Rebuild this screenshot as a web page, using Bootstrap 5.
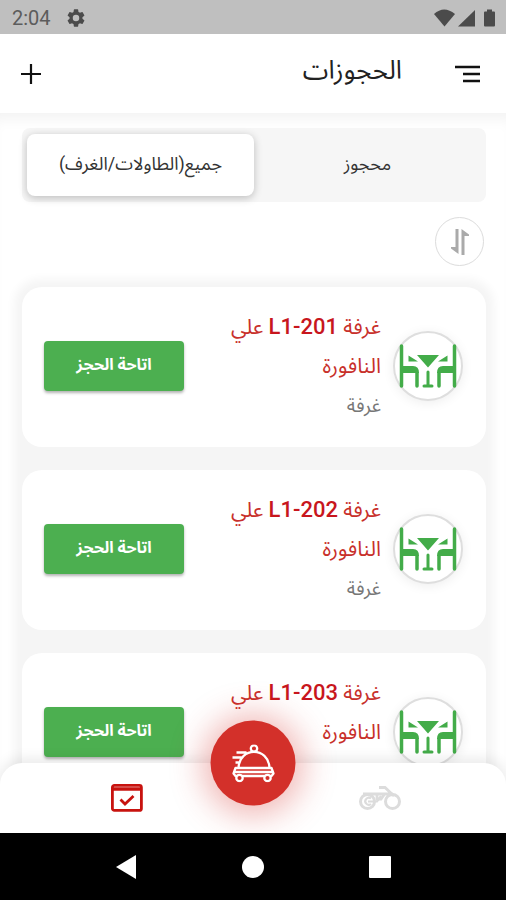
<!DOCTYPE html>
<html lang="ar" dir="rtl">
<head>
<meta charset="utf-8">
<meta name="viewport" content="width=device-width, initial-scale=1">
<title>الحجوزات</title>
<link href="https://cdn.jsdelivr.net/npm/bootstrap@5.3.0/dist/css/bootstrap.min.css" rel="stylesheet">
<style>
  body { font-family: Roboto, "Noto Sans Arabic", "Noto Naskh Arabic", "DejaVu Sans", sans-serif; color: #222; background: #fff; }
  svg { display: block; flex: none; }
  .status-bar { background: #bfbfbf; color: #5c5c5c; height: 34px; padding: 2px 10px 0 12px; font-size: 20px; }
  .app-bar { height: 79px; padding: 0 20px; z-index: 2; }
  .app-title { font-size: 26px; line-height: 32px; font-weight: 400; color: #222; padding-bottom: 8px; }
  .icon-btn { color: #111; }
  .screen { padding: 15px 20px 0 22px; min-height: 0; box-shadow: inset 0 14px 14px -8px #f3f3f3; }
  .tab-set { background: #f6f6f6; border-radius: 8px; padding: 6px 5px; height: 74px; }
  .tab-btn { font-size: 18px; border: 0; border-radius: 8px; background: transparent; color: #333; padding: 0 0 4px; }
  .tab-btn.active { background: #fff; box-shadow: 0 2px 8px rgba(0,0,0,.24); }
  .sort-btn { width: 49px; height: 49px; border: 1px solid #dcdcdc; background: #fff; margin: 15px 2px 21px; }
  .bookings { gap: 23px; background: #f5f5f5; border-radius: 18px; box-shadow: 0 0 10px 8px #f5f5f5; }
  .booking { min-height: 160px; border-radius: 20px; background: #fff; padding: 19px 23px 22px 22px; gap: 12px; }
  .seat-icon { width: 70px; height: 70px; border: 2px solid #dedede; background: #fff; box-shadow: 0 2px 12px rgba(0,0,0,.07); }
  .booking-name { width: 158px; font-size: 21px; line-height: 39px; font-weight: 400; color: #c8302b; }
  .booking-name bdi { font-size: 22px; font-weight: 500; color: #c8161d; }
  .booking-kind { font-size: 19px; line-height: 39px; min-height: 39px; color: #777; }
  .btn-open { width: 140px; height: 50px; border: 0; border-radius: 4px; background: #4caf50; color: #fff; font-size: 16px; font-weight: 700; padding: 0 0 2px; box-shadow: 0 2px 3px rgba(0,0,0,.3); }
  .bottom-nav { height: 70px; border-radius: 22px 22px 0 0; box-shadow: 0 -4px 14px rgba(0,0,0,.09); }
  .main-action { width: 85px; height: 85px; background: #d3302a; box-shadow: 0 2px 32px 8px rgba(211,48,42,.35); }
  .main-action:hover { background: #d3302a; }
  .system-nav { height: 67px; background: #000; }
</style>
</head>
<body>
<div class="d-flex flex-column vh-100 overflow-hidden">
  <div class="status-bar d-flex align-items-center justify-content-between flex-shrink-0" dir="ltr">
    <div class="d-flex align-items-center gap-3">
      <span>2:04</span>
      <svg width="18" height="18" viewBox="2 2 20 20" fill="#4b4b4b"><path d="M19.14 12.94c.04-.3.06-.61.06-.94s-.02-.64-.07-.94l2.03-1.58a.5.5 0 0 0 .12-.61l-1.92-3.32a.49.49 0 0 0-.59-.22l-2.39.96a7 7 0 0 0-1.62-.94l-.36-2.54a.48.48 0 0 0-.48-.41h-3.84a.47.47 0 0 0-.47.41l-.36 2.54c-.59.24-1.13.57-1.62.94l-2.39-.96a.48.48 0 0 0-.59.22L2.74 8.87a.47.47 0 0 0 .12.61l2.03 1.58c-.05.3-.09.63-.09.94s.02.64.07.94l-2.03 1.58a.5.5 0 0 0-.12.61l1.92 3.32c.12.22.37.29.59.22l2.39-.96c.5.38 1.03.7 1.62.94l.36 2.54c.05.24.24.41.48.41h3.84c.24 0 .44-.17.47-.41l.36-2.54a7 7 0 0 0 1.62-.94l2.39.96c.22.08.47 0 .59-.22l1.92-3.32a.47.47 0 0 0-.12-.61zM12 15.6a3.6 3.6 0 1 1 0-7.2 3.6 3.6 0 0 1 0 7.2z"/></svg>
    </div>
    <svg width="62" height="20" viewBox="0 0 62 20" fill="#4b4b4b"><path d="M0 6Q10-3 21 6L10.500 18.500Z"/><path d="M24 18.500L41 2V18.500Z"/><path d="M50 4.500Q50 3.500 51 3.500H53V1.500H58V3.500H60Q61 3.500 61 4.500V17.500Q61 18.500 60 18.500H51Q50 18.500 50 17.500Z"/></svg>
  </div>

  <header class="app-bar bg-white d-flex align-items-center justify-content-between flex-shrink-0 position-relative">
    <div class="d-flex align-items-center">
      <button type="button" class="btn icon-btn border-0 p-0" aria-label="القائمة"><svg width="36" height="24" viewBox="0 0 36 24" stroke="#111" stroke-width="2.300"><path d="M5 5H30M13 12H30M13 19H30"/></svg></button>
      <h1 class="app-title mb-0 mx-5">الحجوزات</h1>
    </div>
    <button type="button" class="btn icon-btn border-0 p-0" aria-label="إضافة"><svg width="22" height="22" viewBox="0 0 22 22" stroke="#111" stroke-width="2.200"><path d="M1 11H21M11 1V21"/></svg></button>
  </header>

  <main class="screen flex-grow-1 position-relative overflow-hidden">
    <div class="tab-set d-flex" role="tablist">
      <button type="button" class="tab-btn w-50" role="tab" aria-selected="false">محجوز</button>
      <button type="button" class="tab-btn active w-50" role="tab" aria-selected="true">جميع(الطاولات/الغرف)</button>
    </div>
    <button type="button" class="sort-btn btn rounded-circle p-0 d-flex align-items-center justify-content-center" aria-label="ترتيب"><svg width="20" height="28" viewBox="0 0 20 28" fill="#aaa"><path d="M5.500 1H8.500V26L1 20.500V19H5.500ZM11.500 27H14.500V8H19V6.500L11.500 1Z"/></svg></button>

    <div class="bookings d-flex flex-column">
      <article class="booking d-flex align-items-center">
        <div class="seat-icon rounded-circle flex-shrink-0 d-flex align-items-center justify-content-center"><svg width="58" height="44" viewBox="0 0 58 44"><use href="#seats"/></svg></div>
        <div>
          <h2 class="booking-name mb-0"><span>غرفة</span> <bdi>L1-201</bdi> <span>علي</span> <span>النافورة</span></h2>
          <div class="booking-kind">غرفة</div>
        </div>
        <button type="button" class="btn btn-open me-auto flex-shrink-0">اتاحة الحجز</button>
      </article>
      <article class="booking d-flex align-items-center">
        <div class="seat-icon rounded-circle flex-shrink-0 d-flex align-items-center justify-content-center"><svg width="58" height="44" viewBox="0 0 58 44"><use href="#seats"/></svg></div>
        <div>
          <h2 class="booking-name mb-0"><span>غرفة</span> <bdi>L1-202</bdi> <span>علي</span> <span>النافورة</span></h2>
          <div class="booking-kind">غرفة</div>
        </div>
        <button type="button" class="btn btn-open me-auto flex-shrink-0">اتاحة الحجز</button>
      </article>
      <article class="booking d-flex align-items-center">
        <div class="seat-icon rounded-circle flex-shrink-0 d-flex align-items-center justify-content-center"><svg width="58" height="44" viewBox="0 0 58 44"><use href="#seats"/></svg></div>
        <div>
          <h2 class="booking-name mb-0"><span>غرفة</span> <bdi>L1-203</bdi> <span>علي</span> <span>النافورة</span></h2>
          <div class="booking-kind"></div>
        </div>
        <button type="button" class="btn btn-open me-auto flex-shrink-0">اتاحة الحجز</button>
      </article>
    </div>

    <nav class="bottom-nav bg-white position-absolute bottom-0 start-0 w-100 d-flex align-items-center">
      <a href="#delivery" class="w-50 d-flex justify-content-center" aria-label="توصيل"><svg width="44" height="28" viewBox="0 0 44 28" fill="none" stroke="#dcdcdc" stroke-width="3"><circle cx="9.500" cy="17.500" r="7"/><circle cx="34.500" cy="17.500" r="7"/><path d="M21 3.500H27L36 12M5 10H35M19 11V15H23L26 11" stroke-width="2.800"/><path d="M13 14.500A3.500 3.500 0 1 0 13 20M10 17.500H19L23 12" stroke-width="2.200"/></svg></a>
      <a href="#bookings" class="w-50 d-flex justify-content-center" aria-label="الحجوزات"><svg width="32" height="28" viewBox="0 0 32 28" fill="none" stroke="#c8130f" stroke-width="2.800"><rect x="1.400" y="1.400" width="29" height="25" rx="2"/><path d="M1 5H31" stroke-width="3.500"/><path d="M9.500 15.500L14 20L22.500 12"/></svg></a>
      <button type="button" class="main-action btn rounded-circle border-0 p-0 position-absolute top-0 start-50 translate-middle d-flex align-items-center justify-content-center" aria-label="طلب جديد"><svg width="44" height="38" viewBox="0 0 44 38" fill="none" stroke="#fff" stroke-width="2.300" stroke-linejoin="round"><circle cx="22.500" cy="4" r="3.200"/><path d="M7 23.500C8 2 37 2 38 23.500M4 23.500H40L42 29L40 31.500H4L2 29Z M3 27.500H41M5 8H15M1 13H11M4 18H9"/><circle cx="8" cy="33.500" r="3.200" fill="#d3302a"/><circle cx="36" cy="33.500" r="3.200" fill="#d3302a"/></svg></button>
    </nav>
  </main>

  <div class="system-nav d-flex align-items-center justify-content-center flex-shrink-0" dir="ltr">
    <button type="button" class="btn border-0 p-0 w-25 d-flex justify-content-center" aria-label="رجوع"><svg width="24" height="26" viewBox="0 0 24 26"><path d="M1 13L21 1V25Z" fill="#fff"/></svg></button>
    <button type="button" class="btn border-0 p-0 w-25 d-flex justify-content-center" aria-label="الرئيسية"><svg width="22" height="22" viewBox="0 0 22 22"><circle cx="11" cy="11" r="11" fill="#fff"/></svg></button>
    <button type="button" class="btn border-0 p-0 w-25 d-flex justify-content-center" aria-label="التطبيقات الأخيرة"><svg width="22" height="22" viewBox="0 0 22 22"><rect width="22" height="22" rx="1" fill="#fff"/></svg></button>
  </div>
</div>
<svg class="position-absolute" width="0" height="0" aria-hidden="true"><defs><g id="seats" fill="none" stroke="#43ac49" stroke-width="3.500" stroke-linecap="round"><path d="M2.500 2V42M55.500 2V42"/><path d="M18 42V29M40 42V29"/><path d="M3 22H14Q20 22 20 29H3ZM55 22H44Q38 22 38 29H55Z" fill="#43ac49" stroke="none"/><path d="M18 11H40L29 23.500ZM9.500 11.500V17.500H19ZM48.500 11.500V17.500H39Z" fill="#43ac49" stroke="none"/><path d="M29 28V41M25 42H33" stroke-width="3"/></g></defs></svg>
<script src="https://cdn.jsdelivr.net/npm/bootstrap@5.3.0/dist/js/bootstrap.bundle.min.js"></script>
</body>
</html>
